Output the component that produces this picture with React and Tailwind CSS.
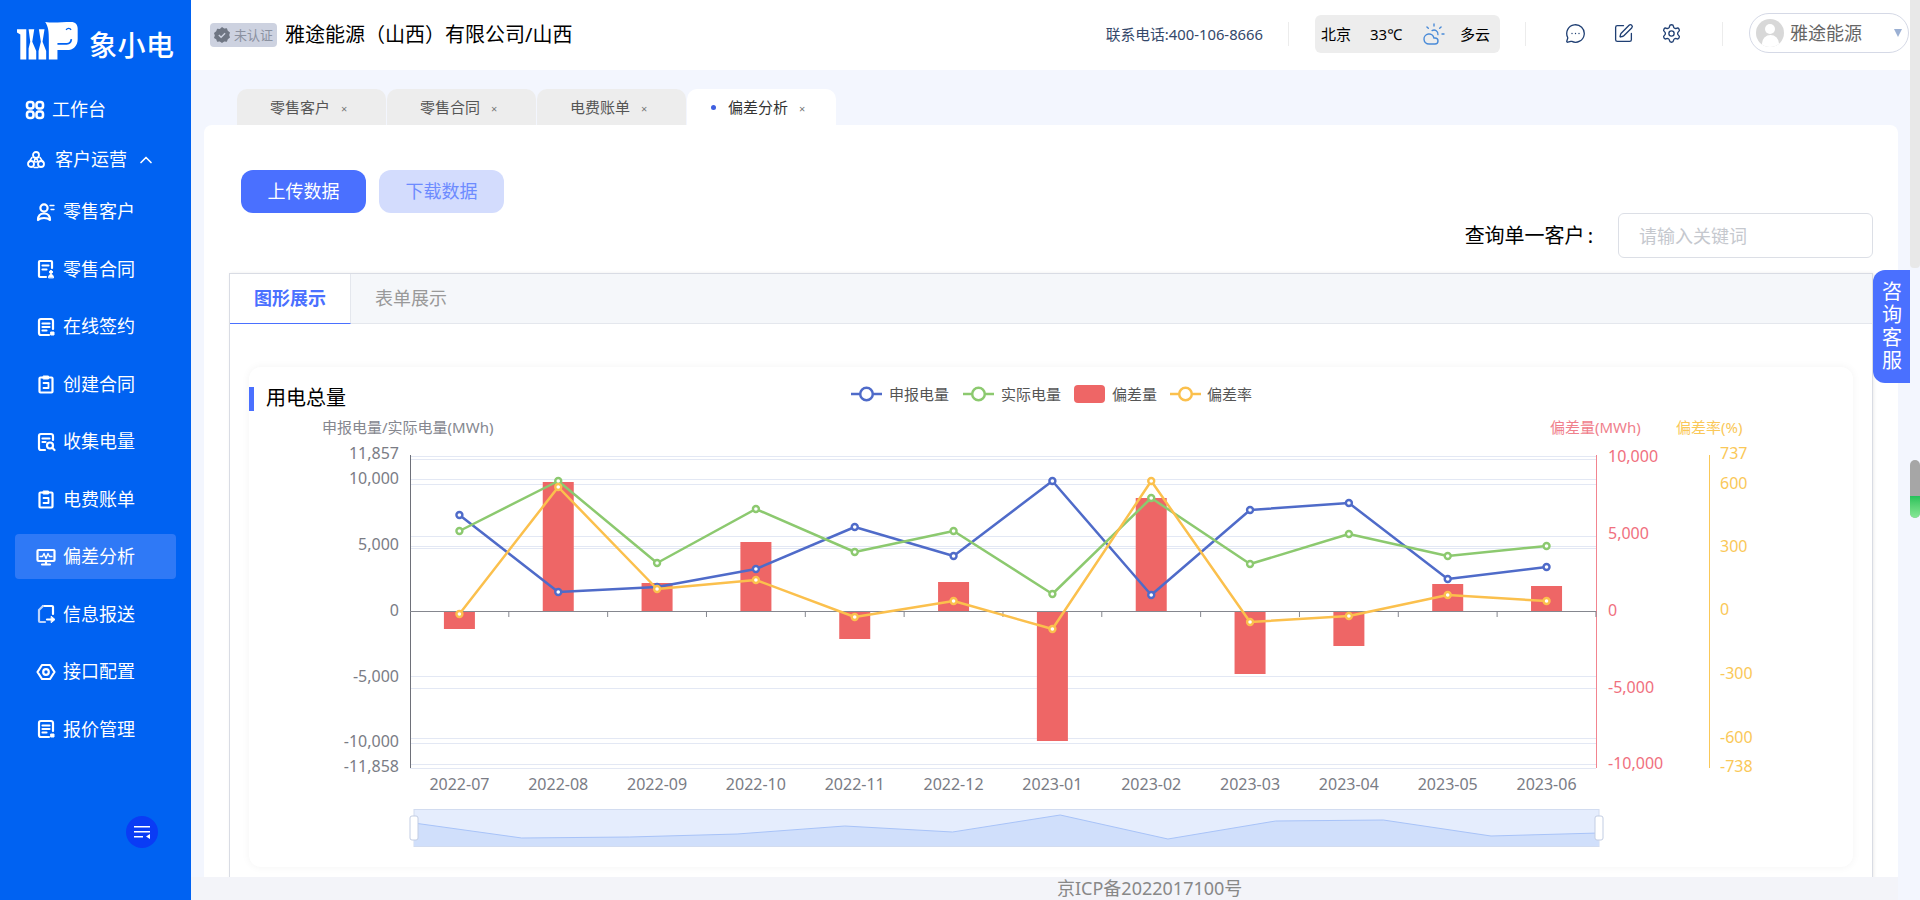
import React from "react";
import { MessageCircleMore, SquarePen, Settings, CloudSun, ChevronUp } from "lucide-react";

const xs = Array.from({ length: 12 }, (_, i) => 410 + 98.83 * (i + 0.5));
const months = ["2022-07", "2022-08", "2022-09", "2022-10", "2022-11", "2022-12", "2023-01", "2023-02", "2023-03", "2023-04", "2023-05", "2023-06"];
const blue = [515, 592, 587, 569, 527, 556, 481, 595, 510, 503, 579, 567];
const green = [531, 481, 563, 509, 552, 531, 594, 498, 564, 534, 556, 546];
const yellow = [614, 487, 589, 580, 617, 601, 629, 481, 622, 616, 595, 601];
const bars = [629, 482, 583, 542, 639, 582, 741, 498, 674, 646, 584, 586];
const miniY = [823, 838, 837, 834, 826, 832, 815, 839, 821, 820, 836, 833];
const gridLines = [456, 459, 479, 484, 536, 546, 548, 676, 688, 738, 743, 764, 768];
const leftLabels = [["11,857", 453], ["10,000", 478], ["5,000", 544], ["0", 610], ["-5,000", 676], ["-10,000", 741], ["-11,858", 766]];
const rightLabels = [["10,000", 456], ["5,000", 533], ["0", 610], ["-5,000", 687], ["-10,000", 763]];
const rateLabels = [["737", 453], ["600", 483], ["300", 546], ["0", 609], ["-300", 673], ["-600", 737], ["-738", 766]];

const IconBase = ({ children }) => (
  <svg width="20" height="20" viewBox="0 0 20 20" fill="none" stroke="white" strokeWidth="2.200" strokeLinejoin="round" strokeLinecap="round" className="shrink-0">
    {children}
  </svg>
);

const GridIcon = () => (
  <IconBase>
    <rect x="2" y="2" width="6.500" height="6.500" rx="2.500" strokeWidth="2.600" />
    <rect x="11.500" y="2" width="6.500" height="6.500" rx="2.500" strokeWidth="2.600" />
    <rect x="2" y="11.500" width="6.500" height="6.500" rx="2.500" strokeWidth="2.600" />
    <rect x="11.500" y="11.500" width="6.500" height="6.500" rx="2.500" strokeWidth="2.600" />
  </IconBase>
);
const TrioIcon = () => (
  <IconBase>
    <circle cx="10" cy="5" r="3" strokeWidth="1.800" />
    <circle cx="5" cy="14" r="3" strokeWidth="1.800" />
    <circle cx="15" cy="14" r="3" strokeWidth="1.800" />
    <circle cx="10" cy="10.500" r="1.600" strokeWidth="1.500" />
    <path d="M6 7.500 3 12M14 7.500l3 4.500M8 17.500h4" strokeWidth="1.500" />
  </IconBase>
);
const UserIcon = () => (
  <IconBase>
    <circle cx="8" cy="6" r="3.600" />
    <path d="M2 18c0-4 2-6.500 6-6.500s6 2.500 6 6.500c-1.500-1.500-3-2-6-2s-4.500.5-6 2Z" />
    <path d="M14 3.500h4M15 7.500h3" strokeWidth="1.300" />
  </IconBase>
);
const DocUserIcon = () => (
  <IconBase>
    <path d="M16 9V3a1 1 0 0 0-1-1H4a1 1 0 0 0-1 1v14a1 1 0 0 0 1 1h6" />
    <path d="M6.500 6.500h6M6.500 10.500h4" />
    <circle cx="15" cy="13" r="1.500" fill="white" strokeWidth="1" />
    <path d="M12.500 18.500c0-2 1-3 2.500-3s2.500 1 2.500 3Z" fill="white" strokeWidth="1" />
  </IconBase>
);
const DocLinesIcon = () => (
  <IconBase>
    <path d="M17 12V4a2 2 0 0 0-2-2H5a2 2 0 0 0-2 2v12a2 2 0 0 0 2 2h8" />
    <path d="M6.500 6.500h7M6.500 10h7M6.500 13.500h4" />
    <path d="M15 15h3v3h-3z" fill="white" strokeWidth="1" />
  </IconBase>
);
const ClipIcon = () => (
  <IconBase>
    <rect x="3.500" y="3.500" width="13" height="15" rx="1" />
    <path d="M7.500 2h5v3h-5z" fill="white" strokeWidth="1" />
    <path d="M7.500 9h5v5h-5" strokeWidth="1.800" />
  </IconBase>
);
const DocSearchIcon = () => (
  <IconBase>
    <path d="M17 8V4a2 2 0 0 0-2-2H5a2 2 0 0 0-2 2v12a2 2 0 0 0 2 2h4" />
    <path d="M6.500 6.500h7M6.500 10h3" />
    <circle cx="14" cy="13.500" r="3" />
    <path d="m16.500 16 2 2" />
  </IconBase>
);
const MonitorIcon = () => (
  <IconBase>
    <rect x="1.500" y="3" width="17" height="11" rx="1" />
    <path d="M4 9.500h2.500l1.500-3 2 5 2-5 1.500 3H16" strokeWidth="1.400" />
    <path d="M10 14v3M6 17.500h8" />
  </IconBase>
);
const DocArrowIcon = () => (
  <IconBase>
    <path d="M7 2h9a1 1 0 0 1 1 1v7" />
    <path d="M7 2 3 6v11a1 1 0 0 0 1 1h5" stroke="#bcd4fb" />
    <path d="M11 15.500h6" />
    <path d="m15.500 12.500 3.500 3-3.500 3Z" fill="white" strokeWidth="1" />
  </IconBase>
);
const HexIcon = () => (
  <IconBase>
    <path d="M6 3h8l4.500 7-4.500 7H6l-4.500-7Z" />
    <circle cx="10" cy="10" r="2.800" />
  </IconBase>
);

const subMenu = [
  { label: "零售客户", icon: <UserIcon /> },
  { label: "零售合同", icon: <DocUserIcon /> },
  { label: "在线签约", icon: <DocLinesIcon /> },
  { label: "创建合同", icon: <ClipIcon /> },
  { label: "收集电量", icon: <DocSearchIcon /> },
  { label: "电费账单", icon: <ClipIcon /> },
  { label: "偏差分析", icon: <MonitorIcon />, active: true },
  { label: "信息报送", icon: <DocArrowIcon /> },
  { label: "接口配置", icon: <HexIcon /> },
  { label: "报价管理", icon: <DocLinesIcon /> },
];

const Logo = () => (
  <div className="flex items-end h-[70px] pl-[17px] pb-[9px]">
    <svg width="61" height="40" viewBox="20 20 184 115" fill="white">
      <path d="M20 42h28v91H30V58l-10-6Z" />
      <path d="M55 42h17l-6 38 12 28v25H55v-33l5-20Z" />
      <path d="M86 42h17l-6 38 11 28v25H85v-25l7-28Z" />
      <path d="M105 20c25 4 50 0 78 0 13 0 20 8 20 20v32c0 20-13 33-33 33h-28v28h-26V74c0-24-1-39-11-54Z" />
      <path d="M142 86h28c8 0 13-6 14-14" fill="none" stroke="#0062f2" strokeWidth="5" />
      <path d="M168 44c4-6 12-6 15 0" fill="none" stroke="#0062f2" strokeWidth="4" />
    </svg>
    <span className="ml-[11px] text-[28px] leading-[32px] font-medium text-white tracking-[0.5px]">象小电</span>
  </div>
);

const Sidebar = () => (
  <aside className="w-[191px] shrink-0 bg-[#0062f2] flex flex-col text-white text-[18px]">
    <Logo />
    <div className="mt-[17px] h-[45px] pl-[25px] flex items-center gap-[7px]">
      <GridIcon />
      <span>工作台</span>
    </div>
    <div className="mt-[5px] h-[45px] pl-[26px] flex items-center gap-[9px]">
      <TrioIcon />
      <span>客户运营</span>
      <ChevronUp size={20} />
    </div>
    <nav className="mt-[7px] flex flex-col gap-[12.5px]">
      {subMenu.map((item) => (
        <div
          key={item.label}
          className={`ml-[15px] w-[161px] h-[45px] pl-[21px] flex items-center gap-[7px] rounded ${item.active ? "bg-[#2f79f6]" : ""}`}
        >
          {item.icon}
          <span>{item.label}</span>
        </div>
      ))}
    </nav>
    <div className="mt-auto mb-[52px] ml-[126px] w-[32px] h-[32px] rounded-full bg-[#0a3cf5] flex items-center justify-center">
      <svg width="18" height="16" viewBox="0 0 18 16" fill="white">
        <path d="M1 2h16v1.600H1zM1 7h16v1.600H1zM1 12h9v1.600H1zM17 10v5l-4-2.500Z" />
      </svg>
    </div>
  </aside>
);

const Divider = () => <div className="w-px h-[24px] bg-[#ececec]" />;

const Header = () => (
  <header className="h-[70px] shrink-0 bg-white flex items-center pl-[19px] pr-[1px]">
    <div className="w-[67px] h-[24px] rounded bg-[#cdd2e0] flex items-center gap-[3px] pl-[3px]">
      <svg width="18" height="18" viewBox="0 0 18 18">
        <path d="M9 1l2.200 1.500 2.700-.2.900 2.500 2.200 1.600-.8 2.600.8 2.600-2.200 1.600-.9 2.500-2.700-.2L9 17l-2.200-1.500-2.700.2-.9-2.500L1 12.100l.8-2.600L1 6.900l2.200-1.600.9-2.500 2.700.2Z" fill="#6f7683" />
        <path d="m5.800 9 2.300 2.300 4-4" fill="none" stroke="#cdd2e0" strokeWidth="1.400" />
      </svg>
      <span className="text-[13px] text-[#8b91a0] leading-none">未认证</span>
    </div>
    <h1 className="ml-[8px] text-[20px] text-black">雅途能源（山西）有限公司/山西</h1>
    <span className="ml-auto mb-[2px] text-[14.8px] text-[#34486a]">联系电话:400-106-8666</span>
    <div className="ml-[25px] mb-[2px]"><Divider /></div>
    <div className="ml-[26px] w-[185px] h-[38px] mb-[2px] rounded-md bg-[#ededed] flex items-center pl-[6px] text-[15px] text-black">
      <span>北京</span>
      <span className="ml-[19px]">33℃</span>
      <CloudSun size={24} strokeWidth={1.400} className="ml-[20px] text-[#4a8bd8]" />
      <span className="ml-[14px]">多云</span>
    </div>
    <div className="ml-[25px] mb-[2px]"><Divider /></div>
    <div className="ml-[39px] mb-[4px] flex items-center gap-[27px] text-[#1f3f73]">
      <MessageCircleMore size={21} strokeWidth={1.500} />
      <SquarePen size={21} strokeWidth={1.500} />
      <Settings size={21} strokeWidth={1.500} />
    </div>
    <div className="ml-[40px] mb-[2px]"><Divider /></div>
    <div className="ml-[26px] mb-[4px] w-[160px] h-[40px] rounded-[20px] border border-[#d5d9e6] flex items-center pl-[6px]">
      <div className="w-[28px] h-[28px] rounded-full bg-[#d8d8d8] overflow-hidden flex flex-col items-center">
        <div className="mt-[5px] w-[10px] h-[10px] rounded-full bg-white" />
        <div className="mt-[1px] w-[17px] h-[12px] rounded-t-full bg-white" />
      </div>
      <span className="ml-[6px] text-[18px] text-[#666]">雅途能源</span>
      <span className="ml-auto mr-[6px] w-0 h-0 border-x-[4px] border-x-transparent border-t-[8px] border-t-[#9bb0d3]" />
    </div>
  </header>
);

const tabs = ["零售客户", "零售合同", "电费账单", "偏差分析"];

const TabBar = () => (
  <div className="h-[55px] shrink-0 flex items-end pl-[46px] gap-px">
    {tabs.map((t, i) => {
      const active = i === 3;
      return (
        <div
          key={t}
          className={`w-[149px] h-[36px] rounded-t-[10px] flex items-center text-[15px] ${active ? "bg-white text-[#333] pl-[24px]" : "bg-[#ededed] text-[#555] pl-[33px]"}`}
        >
          {active && <span className="w-[5px] h-[5px] rounded-full bg-[#3f5fe0] mr-[12px]" />}
          <span>{t}</span>
          <span className="ml-[11px] mt-[2px] text-[11px] text-[#777] leading-none">×</span>
        </div>
      );
    })}
  </div>
);

const LegendLine = ({ color }) => (
  <svg width="31" height="18" viewBox="0 0 31 18">
    <path d="M0 9h31" stroke={color} strokeWidth="2.500" />
    <circle cx="15.500" cy="9" r="6.300" fill="white" stroke={color} strokeWidth="2.500" />
  </svg>
);

const Legend = () => (
  <div className="ml-[505px] mt-[-2px] flex items-center text-[15px] text-[#555] h-[18px] self-start">
    <LegendLine color="#4f6bc9" />
    <span className="ml-[7px]">申报电量</span>
    <div className="ml-[14px]"><LegendLine color="#8cc96f" /></div>
    <span className="ml-[7px]">实际电量</span>
    <div className="ml-[13px] w-[31px] h-[18px] rounded bg-[#ee6666]" />
    <span className="ml-[7px]">偏差量</span>
    <div className="ml-[13px]"><LegendLine color="#fbc04d" /></div>
    <span className="ml-[6px]">偏差率</span>
  </div>
);

const toPoints = (ys) => ys.map((y, i) => `${xs[i]},${y}`).join(" ");
const miniXs = miniY.map((_, i) => 414 + 107.7 * i);
const miniLine = miniY.map((y, i) => `${miniXs[i]},${y}`).join(" ");

const Series = ({ data, color }) => (
  <g>
    <polyline points={toPoints(data)} fill="none" stroke={color} strokeWidth="2.500" strokeLinejoin="round" />
    {data.map((y, i) => (
      <circle key={i} cx={xs[i]} cy={y} r="3" fill="white" stroke={color} strokeWidth="2.400" />
    ))}
  </g>
);

// 图表坐标直接用页面坐标，viewBox 偏移到卡片位置
const Chart = () => (
  <svg width="1604" height="452" viewBox="249 415 1604 452" className="block" fontSize="16">
    <text x="322" y="427" fontSize="15" fill="#85878f" dominantBaseline="central">申报电量/实际电量(MWh)</text>
    <text x="1550" y="427" fontSize="15" fill="#f0808c" dominantBaseline="central">偏差量(MWh)</text>
    <text x="1676" y="427" fontSize="15" fill="#fac858" dominantBaseline="central">偏差率(%)</text>

    {gridLines.map((y) => (
      <line key={y} x1="410" x2="1596" y1={y + 0.5} y2={y + 0.5} stroke="#e3e8f4" strokeWidth="1" />
    ))}

    {bars.map((y, i) => (
      <rect key={i} x={xs[i] - 15.500} width="31" y={Math.min(y, 611)} height={Math.abs(y - 611)} fill="#ee6666" />
    ))}

    <line x1="410.500" x2="410.500" y1="455" y2="768" stroke="#6e7079" />
    <line x1="1596.500" x2="1596.500" y1="455" y2="768" stroke="#f2848f" />
    <line x1="1709.500" x2="1709.500" y1="455" y2="768" stroke="#fac858" />
    <line x1="410" x2="1596" y1="611.500" y2="611.500" stroke="#85878f" />
    {xs.map((x, i) => (
      <line key={i} x1={x + 49.4} x2={x + 49.4} y1="611" y2="617" stroke="#85878f" />
    ))}

    <Series data={blue} color="#4f6bc9" />
    <Series data={green} color="#8cc96f" />
    <Series data={yellow} color="#fbc04d" />

    {leftLabels.map(([t, y]) => (
      <text key={t} x="399" y={y} textAnchor="end" fill="#7a7c85" dominantBaseline="central">{t}</text>
    ))}
    {rightLabels.map(([t, y]) => (
      <text key={t} x="1608" y={y} fill="#f0707e" dominantBaseline="central">{t}</text>
    ))}
    {rateLabels.map(([t, y]) => (
      <text key={t} x="1720" y={y} fill="#fac858" dominantBaseline="central">{t}</text>
    ))}
    {months.map((m, i) => (
      <text key={m} x={xs[i]} y="784" textAnchor="middle" fill="#7a7c85" dominantBaseline="central">{m}</text>
    ))}

    <rect x="414" y="809.500" width="1185" height="37" fill="#e5edfd" stroke="#d2dcf0" />
    <polygon points={`414,846 ${miniLine} 1599,846`} fill="#d0dffb" />
    <polyline points={miniLine} fill="none" stroke="#a8c3f8" />
    <rect x="410" y="816" width="8" height="24" rx="2" fill="white" stroke="#c2cde3" />
    <rect x="1595" y="816" width="8" height="24" rx="2" fill="white" stroke="#c2cde3" />
  </svg>
);

const ChartCard = () => (
  <div className="mt-[43px] ml-[19px] mr-[19px] h-[500px] rounded-xl bg-white shadow-[0_0_8px_rgba(0,0,0,0.05)] flex flex-col">
    <div className="h-[48px] shrink-0 pt-[20px] flex">
      <div className="h-[24px] border-l-[5px] border-[#4a70ff] pl-[12px] text-[20px] leading-[22px] text-black shrink-0">用电总量</div>
      <Legend />
    </div>
    <Chart />
  </div>
);

const Panel = () => (
  <section className="flex-1 min-h-0 ml-[13px] bg-white rounded-t-lg overflow-hidden">
    <div className="pt-[45px] pl-[37px] flex gap-[13px] text-[18px]">
      <button className="w-[125px] h-[43px] rounded-xl bg-[#4a70ff] text-white">上传数据</button>
      <button className="w-[125px] h-[43px] rounded-xl bg-[#d3dcfd] text-[#6d8bff]">下载数据</button>
    </div>
    <div className="flex justify-end items-center pr-[25px]">
      <span className="text-[20px] text-black">查询单一客户</span>
      <span className="ml-[3px] mr-[25px] text-[20px] text-black">:</span>
      <input
        placeholder="请输入关键词"
        className="w-[255px] h-[45px] rounded-md border border-[#dcdfe6] pl-[20px] text-[18px] placeholder:text-[#c5c8ce] outline-none"
      />
    </div>
    <div className="mt-[15px] ml-[25px] mr-[25px] h-[700px] border border-[#d9dce4] shadow-[1px_0_3px_rgba(0,0,0,0.08)]">
      <div className="h-[50px] bg-[#f5f7fa] border-b border-[#e4e7ed] flex text-[18px]">
        <div className="w-[121px] h-[50px] bg-white border-r border-b border-r-[#e4e7ed] border-b-[#4a70ff] font-bold text-[#4a70ff] flex items-center justify-center">图形展示</div>
        <div className="w-[120px] h-[49px] text-[#999] flex items-center justify-center">表单展示</div>
      </div>
      <ChartCard />
    </div>
  </section>
);

const Scrollbar = () => (
  <div className="w-[10px] shrink-0">
    <div className="h-[268px] bg-[#e8e8e8] rounded-b" />
    <div className="mt-[192px] h-[58px] rounded-full overflow-hidden bg-[#a6a6a6] flex flex-col justify-end">
      <div className="h-[22px] bg-gradient-to-b from-[#22c25a] to-[#86e896]" />
    </div>
  </div>
);

export default function App() {
  return (
    <div className="h-screen flex overflow-hidden bg-[#f3f6fe] font-['Noto_Sans','Noto_Sans_CJK_SC',sans-serif]">
      <Sidebar />
      <main className="relative flex-1 min-w-0 flex">
        <div className="flex-1 min-w-0 flex flex-col">
          <Header />
          <TabBar />
          <div className="flex-1 min-h-0 flex flex-col pr-[12px]">
            <Panel />
            <footer className="h-[23px] shrink-0 bg-[#f3f4f9] pl-[866px] text-[18px] leading-[23px] text-[#888]">京ICP备2022017100号</footer>
          </div>
        </div>
        <Scrollbar />
        <div className="absolute right-[10px] top-[270px] w-[37px] h-[113px] rounded-l-xl bg-[#4a70ff] text-white text-[20px] tracking-[3.300px] [writing-mode:vertical-rl] flex items-center justify-center pt-[3px] pr-[2px]">
          咨询客服
        </div>
      </main>
    </div>
  );
}
